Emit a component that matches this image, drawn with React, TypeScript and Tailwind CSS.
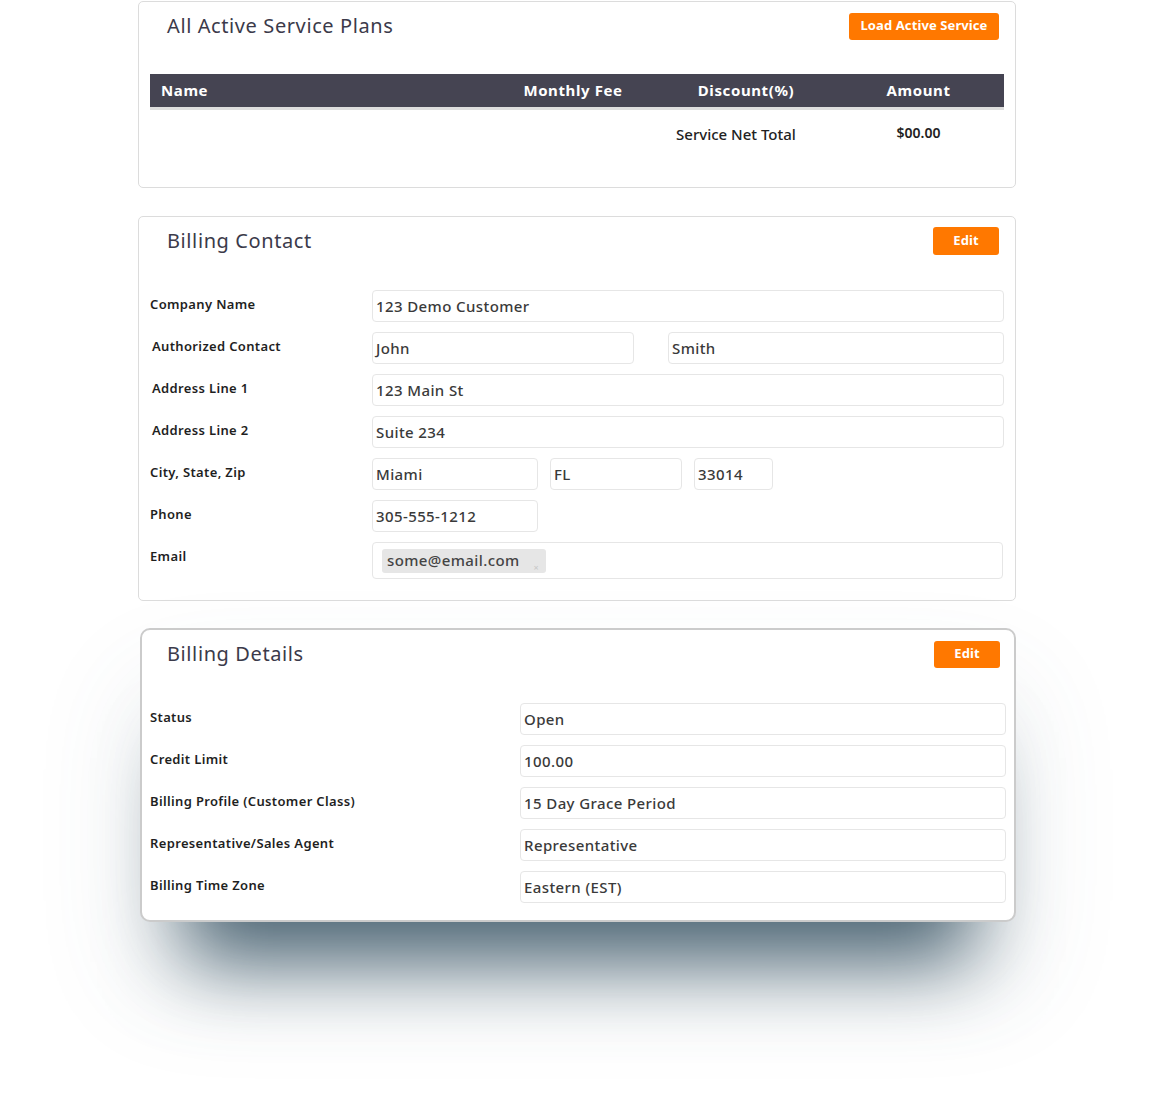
import React from "react";

const font = { fontFamily: '"Noto Sans", "Open Sans", Arial, sans-serif' };

function Field({ w, children, h = "h-[32px]" }: { w?: string; children?: React.ReactNode; h?: string }) {
  return (
    <div className={`${w ?? "flex-1"} ${h} flex items-center rounded-[4px] border border-[#e6e6e6] bg-white px-[3px] text-[15px] font-medium tracking-[0.4px] text-[#3a3a3a]`}>
      {children}
    </div>
  );
}

function Label({ children }: { children: React.ReactNode }) {
  return <div className="flex h-[32px] items-center pb-[3px] text-[13px] font-semibold tracking-[0.35px] text-[#1f1f1f]">{children}</div>;
}

function Title({ children }: { children: React.ReactNode }) {
  return <div className="pl-[17px] text-[20px] leading-[28px] tracking-[0.6px] text-[#3b3a4a]">{children}</div>;
}

function OrangeBtn({ children, w }: { children: React.ReactNode; w: string }) {
  return (
    <div className={`${w} flex h-[27px] items-center justify-center rounded-[3px] bg-[#ff7800] text-[13px] font-bold tracking-[0.1px] text-white`}>
      {children}
    </div>
  );
}

export default function App() {
  return (
    <div style={font} className="min-h-[1093px] w-[1158px] bg-white">
      {/* Card 1 */}
      <div className="ml-[138px] mt-px w-[878px] rounded-[5px] border border-[#dcdcdc] bg-white px-[11px] pb-[29px] pt-[10px]">
        <div className="flex items-center justify-between pr-[5px]">
          <Title>All Active Service Plans</Title>
          <OrangeBtn w="w-[150px]">Load Active Service</OrangeBtn>
        </div>
        <div className="mt-[34px]">
          <div className="grid h-[33px] grid-cols-[336px_174px_172px_173px] items-center bg-[#454452] text-[15px] font-bold tracking-[0.6px] text-white">
            <div className="pl-[11px]">Name</div>
            <div className="text-center">Monthly Fee</div>
            <div className="text-center">Discount(%)</div>
            <div className="text-center">Amount</div>
          </div>
          <div className="h-[3px] bg-[#dedede]" />
          <div className="grid h-[48px] grid-cols-[336px_174px_172px_173px] items-center text-[#222]">
            <div />
            <div />
            <div className="pr-[20px] text-center text-[15px] font-medium">Service Net Total</div>
            <div className="mb-[3px] text-center text-[14px] font-semibold">$00.00</div>
          </div>
        </div>
      </div>

      {/* Card 2 */}
      <div className="ml-[138px] mt-[28px] w-[878px] rounded-[5px] border border-[#dcdcdc] bg-white px-[11px] pb-[21px] pt-[10px]">
        <div className="flex h-[28px] items-center justify-between pr-[5px]">
          <Title>Billing Contact</Title>
          <OrangeBtn w="w-[66px] h-[28px]">Edit</OrangeBtn>
        </div>
        <div className="mt-[35px] grid grid-cols-[222px_1fr] gap-y-[10px]">
          <Label>Company Name</Label>
          <Field>123 Demo Customer</Field>
          <Label><span className="pl-[2px]">Authorized Contact</span></Label>
          <div className="flex gap-[34px]">
            <Field w="w-[262px]">John</Field>
            <Field>Smith</Field>
          </div>
          <Label><span className="pl-[2px]">Address Line 1</span></Label>
          <Field>123 Main St</Field>
          <Label><span className="pl-[2px]">Address Line 2</span></Label>
          <Field>Suite 234</Field>
          <Label>City, State, Zip</Label>
          <div className="flex gap-[12px]">
            <Field w="w-[166px]">Miami</Field>
            <Field w="w-[132px]">FL</Field>
            <Field w="w-[79px]">33014</Field>
          </div>
          <Label>Phone</Label>
          <div className="flex">
            <Field w="w-[166px]">305-555-1212</Field>
          </div>
          <Label>Email</Label>
          <div className="mr-px flex h-[37px] items-center rounded-[4px] border border-[#e6e6e6] px-[9px]">
            <div className="relative flex h-[24px] w-[164px] items-center rounded-[3px] bg-[#e6e6e6] pl-[5px] text-[15px] font-medium tracking-[0.4px] text-[#444]">
              some@email.com
              <span className="absolute bottom-[1px] right-[7px] text-[9px] leading-none text-[#c8c8c8]">×</span>
            </div>
          </div>
        </div>
      </div>

      {/* Card 3 */}
      <div className="ml-[140px] mt-[27px] w-[876px] rounded-[10px] border-2 border-[#cbcbcb] bg-white px-[8px] pb-[17px] pt-[10px] shadow-[0_85px_80px_-45px_rgba(75,100,115,1),0_60px_110px_0_rgba(75,100,115,0.12)]">
        <div className="flex h-[28px] items-center justify-between pr-[6px]">
          <Title>Billing Details</Title>
          <OrangeBtn w="w-[66px] h-[27px]">Edit</OrangeBtn>
        </div>
        <div className="mt-[35px] grid grid-cols-[370px_1fr] gap-y-[10px]">
          <Label>Status</Label>
          <Field>Open</Field>
          <Label>Credit Limit</Label>
          <Field>100.00</Field>
          <Label>Billing Profile (Customer Class)</Label>
          <Field>15 Day Grace Period</Field>
          <Label>Representative/Sales Agent</Label>
          <Field>Representative</Field>
          <Label>Billing Time Zone</Label>
          <Field>Eastern (EST)</Field>
        </div>
      </div>
    </div>
  );
}
